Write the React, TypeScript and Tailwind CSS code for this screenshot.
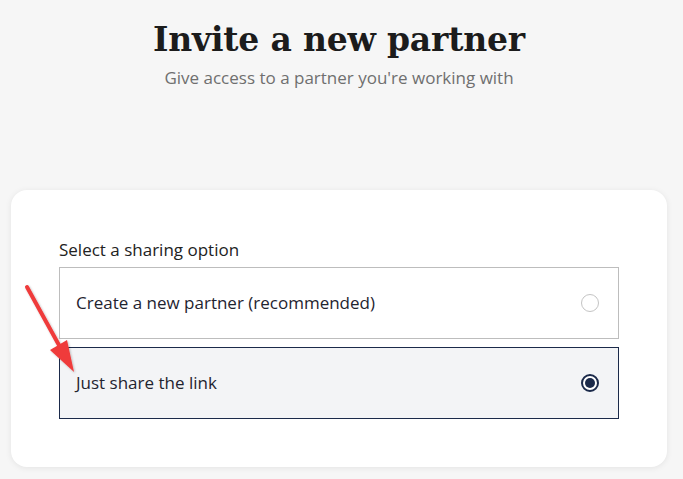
import React from "react";

export default function App() {
  return (
    <div className="relative min-h-[479px] bg-[#f6f6f6] pl-[11px] pr-[16px] pt-[16px] font-['Open_Sans',sans-serif]">
      <h1 className="text-center font-['DejaVu_Serif',serif] text-[33px] font-bold leading-[48px] tracking-[-0.2px] text-[#1c1c1c]">
        Invite a new partner
      </h1>
      <p className="mt-[2px] text-center text-[17px] leading-6 text-[#6f6f6f]">
        Give access to a partner you're working with
      </p>
      <div className="mt-[100px] rounded-2xl bg-white px-[48px] pb-[48px] pt-[48px] shadow-[0_1px_6px_rgba(0,0,0,0.08)]">
        <div className="mb-[5px] text-[17px] leading-6 text-[#222]">Select a sharing option</div>
        <div className="flex flex-col gap-[8px]">
          <div className="flex h-[72px] items-center justify-between border border-[#bdbdbd] bg-white pl-[16px] pr-[19px]">
            <span className="text-[17px] text-[#1f2430]">Create a new partner (recommended)</span>
            <span className="h-[18px] w-[18px] rounded-full border border-[#c4c4c4] bg-white" />
          </div>
          <div className="flex h-[72px] items-center justify-between border border-[#1b2a4a] bg-[#f3f4f6] pl-[16px] pr-[19px]">
            <span className="text-[17px] text-[#1f2430]">Just share the link</span>
            <span className="flex h-[18px] w-[18px] items-center justify-center rounded-full border-2 border-[#1b2a4a] bg-white">
              <span className="h-[10px] w-[10px] rounded-full bg-[#1b2a4a]" />
            </span>
          </div>
        </div>
      </div>
      <svg
        className="pointer-events-none absolute left-0 top-0"
        width="683"
        height="479"
        viewBox="0 0 683 479"
      >
        <defs>
          <filter id="sh" x="-20%" y="-20%" width="140%" height="140%">
            <feDropShadow dx="1" dy="1" stdDeviation="1" floodColor="#000" floodOpacity="0.25" />
          </filter>
        </defs>
        <g filter="url(#sh)">
          <line x1="27" y1="287" x2="60" y2="347" stroke="#ef3b3b" strokeWidth="4" strokeLinecap="round" />
          <polygon points="50,350 67,340 74,372" fill="#ef3b3b" />
        </g>
      </svg>
    </div>
  );
}
